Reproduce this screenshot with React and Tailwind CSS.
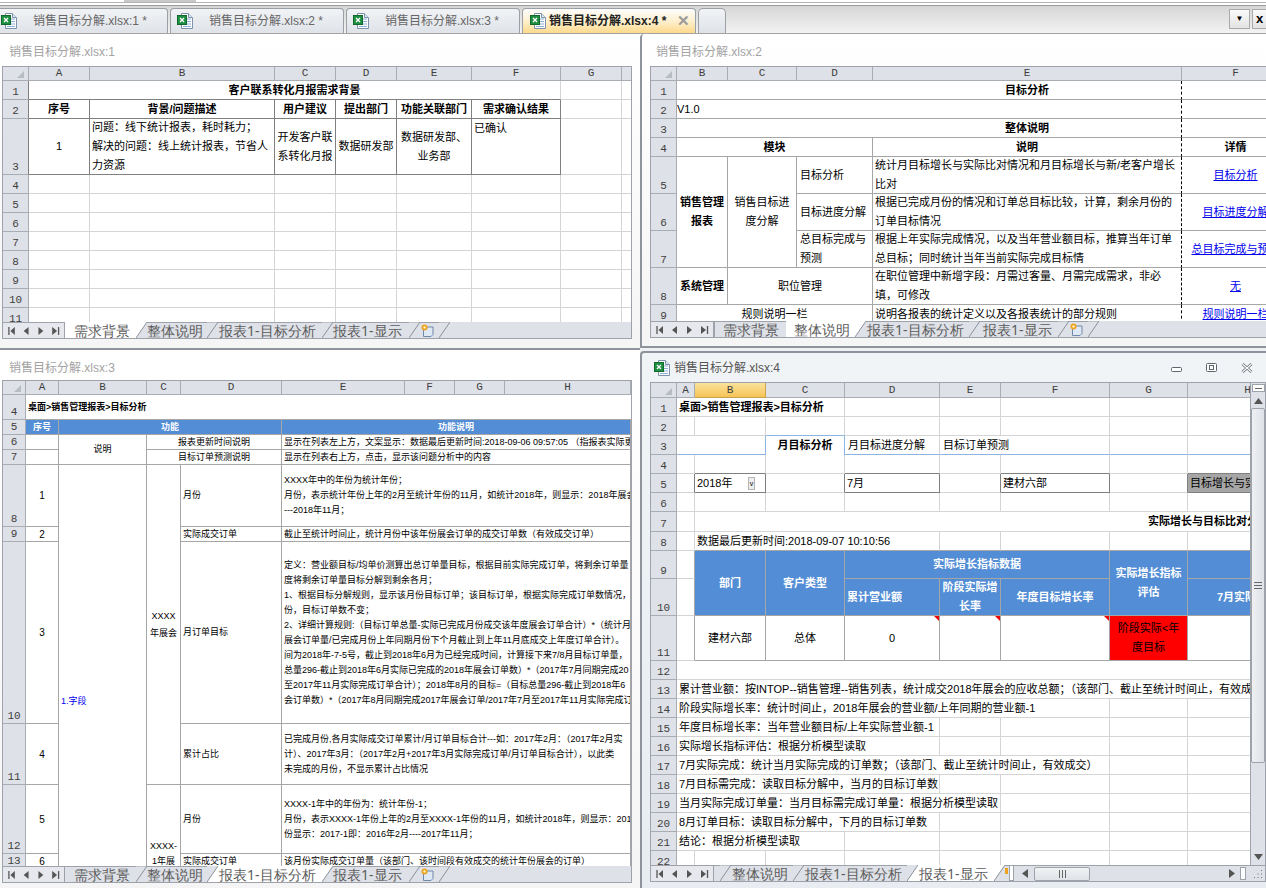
import React from 'react';

const G = 'border-r border-b border-[#d4d4d4]';
const L = 'border-r border-b border-[#a6a6a6]';
const D = 'border-r border-b border-[#808080]';
const BAR = 'border-[#9ea3ab]';

function C({ className = '', children }) {
  return <div className={`flex items-center overflow-hidden whitespace-nowrap min-w-0 min-h-0 ${className}`}>{children}</div>;
}

function Lines({ className = '', items }) {
  return (
    <div className={className}>
      {items.map((t, i) => (
        <div key={i}>{t}</div>
      ))}
    </div>
  );
}

function Hdr({ l, active }) {
  return (
    <div className={`flex items-center justify-center overflow-hidden border-r border-b [font-family:'Liberation_Mono',monospace] text-[11px] text-[#3f3f3f] ${active ? 'bg-gradient-to-b from-[#fbe29a] to-[#f6c455] border-[#c9a24a]' : 'bg-[#dee1e7] border-[#a8acb3]'}`}>
      {l}
    </div>
  );
}

function Corner() {
  return (
    <div className="flex items-end justify-end pr-[4px] pb-[2px] bg-[#dee1e7] border-r border-b border-[#a8acb3]">
      <svg width="7" height="7" viewBox="0 0 7 7"><polygon points="7,0 7,7 0,7" fill="#b7bbc2" /></svg>
    </div>
  );
}

function R({ n, className = '' }) {
  return (
    <div className={`flex items-end justify-center overflow-hidden bg-[#dee1e7] border-r border-b border-[#a8acb3] [font-family:'Liberation_Mono',monospace] text-[11px] leading-[14px] text-[#3f3f3f] ${className}`}>
      {n}
    </div>
  );
}

function ExcelIcon() {
  return (
    <svg width="16" height="16" viewBox="0 0 16 16" className="shrink-0">
      <path d="M4.5 0.5h7l4 4v11h-11z" fill="#fdfdfe" stroke="#7f93ad" />
      <path d="M11.5 0.5v4h4" fill="#dfe7f2" stroke="#7f93ad" />
      <path d="M10 6h4M10 8.5h4M10 11h4M6 13.5h8" stroke="#8fb0d8" />
      <rect x="0.5" y="2.5" width="9" height="9" fill="#1f8f41" stroke="#0f6a2c" />
      <path d="M3 5l4 4M7 5l-4 4" stroke="#fff" strokeWidth="1.3" />
    </svg>
  );
}

function Nav({ w }) {
  return (
    <div className={`h-full shrink-0 flex items-center bg-[#e6e8ed] border-t border-r border-[#9ea3ab] ${w}`}>
      <svg width="62" height="16" viewBox="0 0 62 16">
        <path d="M6 4v8" stroke="#555" strokeWidth="1.3" />
        <polygon points="7.5,8 12,4 12,12" fill="#555" />
        <polygon points="21,8 26,4 26,12" fill="#555" />
        <polygon points="41,8 36,4 36,12" fill="#555" />
        <polygon points="50,4 55,8 50,12" fill="#555" />
        <path d="M56.5 4v8" stroke="#555" strokeWidth="1.3" />
      </svg>
    </div>
  );
}

function Slant({ fill }) {
  return (
    <svg width="11" height="16" viewBox="0 0 11 16" className="shrink-0">
      <path d="M0 0H11" stroke={fill ? 'none' : '#9ea3ab'} />
      {fill === 'left' && <polygon points="0,0 11,0 0,16" fill="#fff" />}
      {fill === 'right' && <polygon points="11,0 11,16 0,16" fill="#fff" />}
      <line x1="0" y1="16" x2="11" y2="0" stroke="#8d9199" />
    </svg>
  );
}

function Tab({ w, label, active, pl = '' }) {
  return (
    <div className={`h-full shrink-0 flex items-center text-[14px] text-[#5c5c5c] ${w} ${pl} ${active ? 'bg-white' : 'border-t border-[#9ea3ab]'}`}>
      {label}
    </div>
  );
}

function NewSheet() {
  return (
    <div className="h-full w-[19px] shrink-0 flex items-center justify-end pr-[4px] border-t border-[#9ea3ab]">
      <svg width="14" height="14" viewBox="0 0 14 14">
        <path d="M2.5 3h9.5v7.5l-2 2H2.5z" fill="#dfe8f5" stroke="#6f87a8" />
        <circle cx="3.5" cy="3.5" r="3" fill="#f0a21f" />
        <circle cx="3.5" cy="3.5" r="1.2" fill="#fff2c0" />
      </svg>
    </div>
  );
}

function Sheet({ size, inner, bar, children }) {
  return (
    <div className={`shrink-0 flex flex-col border ${BAR} ${size}`}>
      <div className={`overflow-hidden bg-white [font-family:'Liberation_Sans','Noto_Sans_CJK_SC',sans-serif] ${inner}`}>{children}</div>
      <div className="h-[16px] shrink-0 flex bg-[#dee1e7] overflow-hidden">{bar}</div>
    </div>
  );
}

function TopTab({ title, x, active, first }) {
  return (
    <div className={`h-[25px] w-[174px] shrink-0 flex items-center rounded-t-[4px] border border-b-0 border-[#9aa0a6] ${first ? '-ml-[6px]' : 'ml-[2px]'} ${active ? 'bg-gradient-to-b from-[#fdfdfd] via-[#fdf0cf] to-[#fdd98a] text-[#222] font-bold' : 'bg-gradient-to-b from-[#f1f3f5] to-[#dfe3e8] text-[#666]'}`}>
      <div className={active ? 'ml-[7px]' : 'ml-[6px]'}><ExcelIcon /></div>
      <span className={active ? 'ml-[3px]' : 'ml-[16px]'}>{title}</span>
      {x && <span className="ml-[11px] text-[15px] font-bold text-[#9b9b9b]">✕</span>}
    </div>
  );
}

function TopBar() {
  return (
    <div className="h-[34px] shrink-0 flex flex-col text-[12px] [font-family:'Liberation_Sans','Noto_Sans_CJK_SC',sans-serif]">
      <div className="h-[3px] border-b border-[#b4b4b4] flex">
        <div className="ml-[124px] w-[72px] h-[2px] bg-[#c9c9c9]" />
      </div>
      <div className="h-[2px]" />
      <div className="h-[29px] flex items-start pt-[2px] bg-gradient-to-b from-[#d6d6d6] to-[#f3f3f3] border-t border-b border-[#9a9a9a] border-b-[#a3a3a3]">
        <TopTab first title="销售目标分解.xlsx:1 *" />
        <TopTab title="销售目标分解.xlsx:2 *" />
        <TopTab title="销售目标分解.xlsx:3 *" />
        <TopTab active x title="销售目标分解.xlsx:4 *" />
        <div className="ml-[2px] h-[25px] w-[28px] rounded-t-[5px] border border-b-0 border-[#9aa0a6] bg-gradient-to-b from-[#f1f3f5] to-[#dfe3e8]" />
        <div className="ml-auto flex gap-[2px] mt-[1px]">
          <div className="w-[21px] h-[20px] flex items-center justify-center border border-[#aaa] bg-gradient-to-b from-[#fafafa] to-[#e3e3e3] text-[8px] text-black">▼</div>
          <div className="w-[14px] h-[20px] flex items-center justify-center border border-[#aaa] border-r-0 bg-gradient-to-b from-[#fafafa] to-[#e3e3e3] text-[13px] font-bold text-black">x</div>
        </div>
      </div>
    </div>
  );
}

const nine = 'text-[9px] leading-[15px]';

function Win1() {
  const rows = [4, 5, 6, 7, 8, 9, 10, 11];
  return (
    <Sheet
      size="w-[630px] h-[273px]"
      inner="h-[255px]"
      bar={
        <>
          <Nav w="w-[62px]" />
          <Tab active w="w-[71px]" pl="pl-[9px]" label="需求背景" />
          <Slant fill="left" />
          <Tab w="w-[60px]" label="整体说明" />
          <Slant />
          <Tab w="w-[104px]" pl="pl-[1px]" label="报表1-目标分析" />
          <Slant />
          <Tab w="w-[76px]" label="报表1-显示" />
          <Slant />
          <NewSheet />
          <Slant />
        </>
      }
    >
      <div className="grid grid-cols-[26px_61px_185px_61px_61px_75px_89px_61px_61px] grid-rows-[14px_19px_19px_56px_19px_19px_19px_19px_19px_19px_19px_19px] text-[11px] leading-[19px] text-black">
        <Corner />
        {['A', 'B', 'C', 'D', 'E', 'F', 'G', ''].map((l, i) => <Hdr key={i} l={l} />)}
        <R n="1" className="border-r-[#808080]" />
        <C className={`col-span-6 justify-center font-bold ${G} border-b-[#808080]`}>客户联系转化月报需求背景</C>
        <C className={G} /><C className={G} />
        <R n="2" className="border-r-[#808080]" />
        <C className={`justify-center font-bold ${D}`}>序号</C>
        <C className={`justify-center font-bold ${D}`}>背景/问题描述</C>
        <C className={`justify-center font-bold ${D}`}>用户建议</C>
        <C className={`justify-center font-bold ${D}`}>提出部门</C>
        <C className={`justify-center font-bold ${D}`}>功能关联部门</C>
        <C className={`justify-center font-bold ${D}`}>需求确认结果</C>
        <C className={G} /><C className={G} />
        <R n="3" className="border-r-[#808080]" />
        <C className={`justify-center ${D}`}>1</C>
        <C className={`pl-[2px] ${D}`}>
          <Lines items={['问题：线下统计报表，耗时耗力；', '解决的问题：线上统计报表，节省人', '力资源']} />
        </C>
        <C className={`justify-center text-center ${D}`}><Lines items={['开发客户联', '系转化月报']} /></C>
        <C className={`justify-center ${D}`}>数据研发部</C>
        <C className={`justify-center text-center ${D}`}><Lines items={['数据研发部、', '业务部']} /></C>
        <C className={`items-start pl-[2px] ${D}`}>已确认</C>
        <C className={G} /><C className={G} />
        {rows.map((n) => (
          <React.Fragment key={n}>
            <R n={n} />
            {[0, 1, 2, 3, 4, 5, 6, 7].map((i) => <C key={i} className={G} />)}
          </React.Fragment>
        ))}
      </div>
    </Sheet>
  );
}

function Link({ children }) {
  return <span className="text-[#0000ee] underline">{children}</span>;
}

function Win2() {
  const E = `${L} border-r-black [border-right-style:dashed]`;
  return (
    <Sheet
      size="w-[620px] h-[272px]"
      inner="h-[254px]"
      bar={
        <>
          <Nav w="w-[63px]" />
          <Tab w="w-[72px]" pl="pl-[8px] border-l border-l-[#9ea3ab]" label="需求背景" />
          <Tab active w="w-[69px]" pl="pl-[8px]" label="整体说明" />
          <Slant fill="left" />
          <Tab w="w-[103px]" pl="pl-[1px]" label="报表1-目标分析" />
          <Slant />
          <Tab w="w-[78px]" pl="pl-[3px]" label="报表1-显示" />
          <Slant />
          <NewSheet />
          <Slant />
        </>
      }
    >
      <div className="grid grid-cols-[26px_51px_69px_76px_309px_108px] grid-rows-[14px_19px_19px_19px_19px_37px_37px_37px_37px_19px] text-[11px] leading-[19px] text-black">
        <Corner />
        {['B', 'C', 'D', 'E', 'F'].map((l) => <Hdr key={l} l={l} />)}
        <R n="1" />
        <C className={`col-span-3 border-b border-[#a6a6a6]`} />
        <C className={`justify-center font-bold ${E}`}>目标分析</C>
        <C className={L} />
        <R n="2" />
        <C className={`col-span-3 border-b border-[#a6a6a6]`}>V1.0</C>
        <C className={E} />
        <C className={L} />
        <R n="3" />
        <C className={`col-span-3 border-b border-[#a6a6a6]`} />
        <C className={`justify-center font-bold ${E}`}>整体说明</C>
        <C className={L} />
        <R n="4" />
        <C className={`col-span-3 justify-center font-bold ${L}`}>模块</C>
        <C className={`justify-center font-bold ${E}`}>说明</C>
        <C className={`justify-center font-bold ${L}`}>详情</C>

        <R n="5" />
        <C className={`row-span-3 justify-center text-center font-bold ${L}`}><Lines items={['销售管理', '报表']} /></C>
        <C className={`row-span-3 justify-center text-center ${L}`}><Lines items={['销售目标进', '度分解']} /></C>
        <C className={`pl-[3px] ${L}`}>目标分析</C>
        <C className={`pl-[2px] ${E}`}><Lines items={['统计月目标增长与实际比对情况和月目标增长与新/老客户增长', '比对']} /></C>
        <C className={`justify-center ${L}`}><Link>目标分析</Link></C>

        <R n="6" />
        <C className={`pl-[3px] ${L}`}>目标进度分解</C>
        <C className={`pl-[2px] ${E}`}><Lines items={['根据已完成月份的情况和订单总目标比较，计算，剩余月份的', '订单目标情况']} /></C>
        <C className={`justify-center ${L}`}><Link>目标进度分解</Link></C>

        <R n="7" />
        <C className={`pl-[3px] ${L}`}><Lines items={['总目标完成与', '预测']} /></C>
        <C className={`pl-[2px] ${E}`}><Lines items={['根据上年实际完成情况，以及当年营业额目标，推算当年订单', '总目标；同时统计当年当前实际完成目标情']} /></C>
        <C className={`justify-center ${L}`}><Link>总目标完成与预测</Link></C>

        <R n="8" />
        <C className={`justify-center font-bold ${L}`}>系统管理</C>
        <C className={`col-span-2 justify-center ${L}`}>职位管理</C>
        <C className={`pl-[2px] ${E}`}><Lines items={['在职位管理中新增字段：月需过客量、月需完成需求，非必', '填，可修改']} /></C>
        <C className={`justify-center ${L}`}><Link>无</Link></C>

        <R n="9" />
        <C className={`col-span-3 justify-center ${L}`}>规则说明一栏</C>
        <C className={`pl-[2px] ${E}`}>说明各报表的统计定义以及各报表统计的部分规则</C>
        <C className={`justify-center ${L}`}><Link>规则说明一栏</Link></C>
      </div>
    </Sheet>
  );
}

function Win3() {
  const T = `pl-[2px] ${L}`;
  const N = `justify-center text-[10px] ${L}`;
  return (
    <Sheet
      size="w-[630px] h-[503px]"
      inner="h-[485px]"
      bar={
        <>
          <Nav w="w-[62px]" />
          <Tab w="w-[71px]" pl="pl-[9px]" label="需求背景" />
          <Slant />
          <Tab w="w-[60px]" label="整体说明" />
          <Slant fill="right" />
          <Tab active w="w-[104px]" pl="pl-[1px]" label="报表1-目标分析" />
          <Slant fill="left" />
          <Tab w="w-[76px]" label="报表1-显示" />
          <Slant />
          <NewSheet />
          <Slant />
        </>
      }
    >
      <div className={`grid grid-cols-[23px_33px_88px_34px_101px_123px_50px_50px_126px] grid-rows-[14px_25px_15px_15px_15px_62px_15px_182px_61px_69px_15px] text-black ${nine}`}>
        <Corner />
        {['A', 'B', 'C', 'D', 'E', 'F', 'G', 'H'].map((l) => <Hdr key={l} l={l} />)}

        <R n="4" />
        <C className={`col-span-8 pl-[2px] font-bold border-b border-[#a6a6a6]`}>桌面&gt;销售管理报表&gt;目标分析</C>

        <R n="5" />
        <C className={`justify-center font-bold text-white bg-[#538dd5] ${L}`}>序号</C>
        <C className={`col-span-3 justify-center font-bold text-white bg-[#538dd5] ${L}`}>功能</C>
        <C className={`col-span-4 justify-center font-bold text-white bg-[#538dd5] ${L}`}>功能说明</C>

        <R n="6" />
        <C className={L} />
        <C className={`row-span-2 justify-center ${L}`}>说明</C>
        <C className={`col-span-2 justify-center ${L}`}>报表更新时间说明</C>
        <C className={`col-span-4 ${T}`}>显示在列表左上方，文案显示：数据最后更新时间:2018-09-06 09:57:05 （指报表实际更新时间）</C>

        <R n="7" />
        <C className={L} />
        <C className={`col-span-2 justify-center ${L}`}>目标订单预测说明</C>
        <C className={`col-span-4 ${T}`}>显示在列表右上方，点击，显示该问题分析中的内容</C>

        <R n="8" />
        <C className={N}>1</C>
        <C className={`row-span-6 items-start pl-[2px] pt-[229px] text-[#0000ee] ${L}`}>1.字段</C>
        <C className={`row-span-4 justify-center text-center ${L}`}><Lines className="leading-[17px]" items={['XXXX', '年展会']} /></C>
        <C className={T}>月份</C>
        <C className={`col-span-4 ${T}`}>
          <Lines items={['XXXX年中的年份为统计年份；', '月份，表示统计年份上年的2月至统计年份的11月，如统计2018年，则显示：2018年展会', '---2018年11月；']} />
        </C>

        <R n="9" />
        <C className={N}>2</C>
        <C className={T}>实际成交订单</C>
        <C className={`col-span-4 ${T}`}>截止至统计时间止，统计月份中该年份展会订单的成交订单数（有效成交订单）</C>

        <R n="10" />
        <C className={N}>3</C>
        <C className={T}>月订单目标</C>
        <C className={`col-span-4 ${T}`}>
          <Lines
            items={[
              '定义：营业额目标/均单价测算出总订单量目标，根据目前实际完成订单，将剩余订单量',
              '度将剩余订单量目标分解到剩余各月；',
              '1、根据目标分解规则，显示该月份目标订单；该目标订单，根据实际完成订单数情况，',
              '份，目标订单数不变；',
              '2、详细计算规则:（目标订单总量-实际已完成月份成交该年度展会订单合计）*（统计月',
              '展会订单量/已完成月份上年同期月份下个月截止到上年11月底成交上年度订单合计）。',
              '间为2018年-7-5号，截止到2018年6月为已经完成时间，计算接下来7/8月目标订单量，',
              '总量296-截止到2018年6月实际已完成的2018年展会订单数）*（2017年7月同期完成20',
              '至2017年11月实际完成订单合计）；2018年8月的目标=（目标总量296-截止到2018年6',
              '会订单数）*（2017年8月同期完成2017年展会订单/2017年7月至2017年11月实际完成订',
            ]}
          />
        </C>

        <R n="11" />
        <C className={N}>4</C>
        <C className={T}>累计占比</C>
        <C className={`col-span-4 ${T}`}>
          <Lines items={['已完成月份,各月实际成交订单累计/月订单目标合计---如：2017年2月：（2017年2月实', '计）、2017年3月：（2017年2月+2017年3月实际完成订单/月订单目标合计），以此类', '未完成的月份，不显示累计占比情况']} />
        </C>

        <R n="12" />
        <C className={N}>5</C>
        <C className={`row-span-2 items-start justify-center text-center pt-[54px] ${L}`}><Lines items={['XXXX-', '1年展']} /></C>
        <C className={T}>月份</C>
        <C className={`col-span-4 ${T}`}>
          <Lines items={['XXXX-1年中的年份为：统计年份-1；', '月份，表示XXXX-1年份上年的2月至XXXX-1年份的11月，如统计2018年，则显示：201', '份显示：2017-1即：2016年2月----2017年11月；']} />
        </C>

        <R n="13" />
        <C className={N}>6</C>
        <C className={T}>实际成交订单</C>
        <C className={`col-span-4 ${T}`}>该月份实际成交订单量（该部门、该时间段有效成交的统计年份展会的订单）</C>
      </div>
    </Sheet>
  );
}

function Triangle() {
  return <div className="absolute top-0 right-0 w-0 h-0 border-l-[5px] border-l-transparent border-t-[5px] border-t-[#f00000]" />;
}

function VScroll() {
  return (
    <div className="w-[15px] shrink-0 flex flex-col items-center bg-[#dee1e7] border-l border-[#9ea3ab]">
      <div className="w-[13px] h-[8px] mt-[1px] flex items-center justify-center bg-white border border-[#9ea3ab]">
        <div className="w-[7px] h-px bg-[#666]" />
      </div>
      <svg width="9" height="6" viewBox="0 0 9 6" className="mt-[6px]"><polygon points="4.5,0 9,6 0,6" fill="#555" /></svg>
      <div className="mt-[4px] w-[14px] h-[355px] flex items-center justify-center rounded-[2px] bg-gradient-to-r from-[#eef0f3] to-[#dfe2e7] border border-[#9ea3ab]">
        <svg width="8" height="7" viewBox="0 0 8 7"><path d="M0 .5h8M0 3.5h8M0 6.5h8" stroke="#666" /></svg>
      </div>
      <div className="flex-1" />
      <svg width="9" height="6" viewBox="0 0 9 6" className="mb-[5px]"><polygon points="0,0 9,0 4.5,6" fill="#555" /></svg>
    </div>
  );
}

function HScroll() {
  return (
    <div className="flex-1 h-full flex items-center border-t border-[#9ea3ab] bg-[#dee1e7]">
      <div className="w-[20px] flex justify-center pl-[2px]">
        <svg width="6" height="9" viewBox="0 0 6 9"><polygon points="0,4.5 6,0 6,9" fill="#555" /></svg>
      </div>
      <div className="w-[56px] h-[14px] flex items-center justify-center rounded-[2px] bg-gradient-to-b from-[#f0f2f4] to-[#dfe2e7] border border-[#9ea3ab]">
        <svg width="7" height="8" viewBox="0 0 7 8"><path d="M.5 0v8M3.5 0v8M6.5 0v8" stroke="#666" /></svg>
      </div>
      <div className="flex-1" />
      <svg width="6" height="9" viewBox="0 0 6 9"><polygon points="0,0 6,4.5 0,9" fill="#555" /></svg>
      <div className="ml-[5px] w-[6px] h-[13px] bg-white border border-[#9ea3ab]" />
      <div className="w-[19px] flex justify-end pr-[2px]">
        <svg width="10" height="10" viewBox="0 0 10 10"><path d="M8 1h1v1H8zM8 4.5h1v1H8zM4.5 4.5h1v1h-1zM8 8h1v1H8zM4.5 8h1v1h-1zM1 8h1v1H1z" fill="#777" /></svg>
      </div>
    </div>
  );
}

function Win4() {
  const W = 'border-r border-b border-[#d4d4d4]';
  const bl = 'border-[#8db4e2]';
  const head = `justify-center text-center font-bold text-white bg-[#538dd5] ${L}`;
  const Empty = ({ n }) => Array.from({ length: n }).map((_, i) => <C key={i} className={W} />);
  return (
    <Sheet
      size="w-[616px] h-[500px]"
      inner="h-[482px] flex"
      bar={
        <>
          <Nav w="w-[63px]" />
          <div className="w-[6px] h-full border-t border-[#9ea3ab]" />
          <Slant />
          <Tab w="w-[62px]" pl="pl-[1px]" label="整体说明" />
          <Slant />
          <Tab w="w-[103px]" pl="pl-[1px]" label="报表1-目标分析" />
          <Slant fill="right" />
          <Tab active w="w-[76px]" pl="pl-[1px]" label="报表1-显示" />
          <Slant fill="left" />
          <div className="w-[4px] h-full shrink-0 border-t border-[#9ea3ab] overflow-hidden"><div className="w-[3px] h-[6px] mt-[2px] bg-[#f0a21f]" /></div>
          <div className="w-[5px] h-full shrink-0 bg-white border-x border-y border-[#9ea3ab]" />
          <HScroll />
        </>
      }
    >
      <div className="w-[599px] h-full overflow-hidden shrink-0">
        <div className="grid w-[657px] grid-cols-[26px_18px_71px_79px_95px_61px_109px_78px_120px] grid-rows-[15px_19px_19px_19px_19px_19px_19px_20px_19px_28px_37px_45px_19px_19px_19px_19px_19px_19px_19px_19px_19px_19px_19px] text-[11px] leading-[19px] text-black">
          <Corner />
          <Hdr l="A" />
          <Hdr l="B" active />
          {['C', 'D', 'E', 'F', 'G', 'H'].map((l) => <Hdr key={l} l={l} />)}

          <R n="1" />
          <C className={`col-span-3 pl-[2px] font-bold ${W}`}>桌面&gt;销售管理报表&gt;目标分析</C>
          <Empty n={5} />

          <R n="2" />
          <C className={W} /><C className={W} />
          <C className={`${W} border-b-[#8db4e2]`} />
          <Empty n={5} />

          <R n="3" />
          <C className={`border-b ${bl}`} />
          <C className={`border-r border-b ${bl}`} />
          <C className={`justify-center font-bold border-r ${bl}`}>月目标分析</C>
          <C className={`pl-[3px] border-r border-b ${bl} border-r-[#d4d4d4]`}>月目标进度分解</C>
          <C className={`col-span-2 pl-[3px] border-r border-b ${bl} border-r-[#d4d4d4]`}>目标订单预测</C>
          <C className={`border-r border-b ${bl} border-r-[#d4d4d4]`} />
          <C className={`border-b ${bl}`} />

          <R n="4" />
          <C className={W} />
          <C className={`${W} border-b-[#808080]`} />
          <C className={W} />
          <C className={`${W} border-b-[#808080]`} />
          <C className={W} />
          <C className={`${W} border-b-[#808080]`} />
          <C className={W} />
          <C className={`${W} border-b-[#808080]`} />

          <R n="5" />
          <C className={`${W} border-r-[#808080]`} />
          <C className={`pl-[2px] justify-between pr-[10px] ${D}`}>
            2018年
            <span className="w-[7px] h-[13px] flex items-center justify-center bg-[#eceef1] border border-[#b5b5b5] text-[7px] leading-none">v</span>
          </C>
          <C className={`${W} border-r-[#808080]`} />
          <C className={`pl-[2px] ${D}`}>7月</C>
          <C className={`${W} border-r-[#808080]`} />
          <C className={`pl-[2px] ${D}`}>建材六部</C>
          <C className={`${W} border-r-[#808080]`} />
          <C className={`pl-[2px] bg-[#a6a6a6] ${D}`}>目标增长与实际比对</C>

          <R n="6" />
          <Empty n={8} />

          <R n="7" />
          <C className={W} />
          <C className={`col-span-7 pl-[453px] font-bold ${W}`}>实际增长与目标比对分析</C>

          <R n="8" />
          <C className={W} />
          <C className={`col-span-3 pl-[2px] ${W} border-b-[#a6a6a6]`}>数据最后更新时间:2018-09-07 10:10:56</C>
          <C className={`${W} border-b-[#a6a6a6]`} />
          <C className={`${W} border-b-[#a6a6a6]`} />
          <C className={`${W} border-b-[#a6a6a6]`} />
          <C className={`${W} border-b-[#a6a6a6]`} />

          <R n="9" />
          <C className={`${W} border-r-[#a6a6a6]`} />
          <C className={`row-span-2 ${head}`}>部门</C>
          <C className={`row-span-2 ${head}`}>客户类型</C>
          <C className={`col-span-3 ${head}`}>实际增长指标数据</C>
          <C className={`row-span-2 ${head}`}><Lines items={['实际增长指标', '评估']} /></C>
          <C className={head} />

          <R n="10" />
          <C className={`${W} border-r-[#a6a6a6]`} />
          <C className={`${head} justify-start pl-[2px]`}>累计营业额</C>
          <C className={head}><Lines items={['阶段实际增', '长率']} /></C>
          <C className={head}>年度目标增长率</C>
          <C className={head}>7月实际完成</C>

          <R n="11" />
          <C className={`${W} border-r-[#a6a6a6]`} />
          <C className={`justify-center ${L}`}>建材六部</C>
          <C className={`justify-center ${L}`}>总体</C>
          <C className={`relative justify-center ${L}`}>0<Triangle /></C>
          <C className={`relative ${L}`}><Triangle /></C>
          <C className={`relative ${L}`}><Triangle /></C>
          <C className={`justify-center text-center bg-[#ff0000] ${L}`}><Lines items={['阶段实际<年', '度目标']} /></C>
          <C className={L} />

          <R n="12" />
          <C className={`col-span-8 ${W}`} />

          <R n="13" />
          <C className={`col-span-8 pl-[2px] ${W}`}>累计营业额：按INTOP--销售管理--销售列表，统计成交2018年展会的应收总额；（该部门、截止至统计时间止，有效成交）</C>

          <R n="14" />
          <C className={`col-span-6 pl-[2px] ${W}`}>阶段实际增长率：统计时间止，2018年展会的营业额/上年同期的营业额-1</C>
          <Empty n={2} />

          <R n="15" />
          <C className={`col-span-4 pl-[2px] ${W}`}>年度目标增长率：当年营业额目标/上年实际营业额-1</C>
          <Empty n={4} />

          <R n="16" />
          <C className={`col-span-4 pl-[2px] ${W}`}>实际增长指标评估：根据分析模型读取</C>
          <Empty n={4} />

          <R n="17" />
          <C className={`col-span-6 pl-[2px] ${W}`}>7月实际完成：统计当月实际完成的订单数；（该部门、截止至统计时间止，有效成交）</C>
          <Empty n={2} />

          <R n="18" />
          <C className={`col-span-4 pl-[2px] ${W}`}>7月目标需完成：读取目标分解中，当月的目标订单数</C>
          <Empty n={4} />

          <R n="19" />
          <C className={`col-span-5 pl-[2px] ${W}`}>当月实际完成订单量：当月目标需完成订单量：根据分析模型读取</C>
          <Empty n={3} />

          <R n="20" />
          <C className={`col-span-4 pl-[2px] ${W}`}>8月订单目标：读取目标分解中，下月的目标订单数</C>
          <Empty n={4} />

          <R n="21" />
          <C className={`col-span-3 pl-[2px] ${W}`}>结论：根据分析模型读取</C>
          <Empty n={5} />

          <R n="22" />
          <Empty n={8} />
        </div>
      </div>
      <VScroll />
    </Sheet>
  );
}

const titleFont = "[font-family:'Liberation_Sans','Noto_Sans_CJK_SC',sans-serif]";

export default function App() {
  return (
    <div className="w-[1266px] h-[888px] overflow-hidden flex flex-col bg-white">
      <TopBar />
      <div className="grid grid-cols-[640px_626px] grid-rows-[314px_540px]">
        <div className="pl-[2px] bg-gradient-to-b from-white to-[#f5f5f5]">
          <div className={`h-[32px] pl-[7px] pt-[4px] flex items-center text-[12px] text-[#a3a3a3] ${titleFont}`}>销售目标分解.xlsx:1</div>
          <Win1 />
        </div>
        <div className="pl-[8px] border-l-2 border-b-2 border-[#8f939b] rounded-tl-[4px] bg-gradient-to-b from-white to-[#f5f5f5] overflow-hidden">
          <div className={`h-[32px] pl-[6px] pt-[4px] flex items-center text-[12px] text-[#a3a3a3] ${titleFont}`}>销售目标分解.xlsx:2</div>
          <Win2 />
        </div>
        <div className="pl-[2px] border-t-2 border-[#8f939b] bg-gradient-to-b from-white to-[#f5f5f5]">
          <div className={`h-[30px] pl-[7px] pt-[6px] flex items-center text-[12px] text-[#a3a3a3] ${titleFont}`}>销售目标分解.xlsx:3</div>
          <Win3 />
        </div>
        <div className="pt-[3px] bg-[#eef0f3]">
          <div className="h-full pl-[8px] border-l-2 border-t-2 border-[#8f939b] rounded-tl-[4px] bg-gradient-to-b from-[#f1f4f7] to-[#e9ecf0] overflow-hidden">
            <div className={`h-[29px] pl-[4px] flex items-center text-[12px] text-[#555] ${titleFont}`}>
              <ExcelIcon />
              <span className="ml-[4px]">销售目标分解.xlsx:4</span>
              <div className="ml-auto flex items-center mr-[13px] gap-[24px]">
                <svg width="11" height="5" viewBox="0 0 11 5" className="mt-[4px]"><rect x=".5" y=".5" width="10" height="4" rx="1" fill="#fff" stroke="#5f656d" /></svg>
                <svg width="11" height="9" viewBox="0 0 11 9"><rect x=".5" y=".5" width="10" height="8" rx="1" fill="#fff" stroke="#5f656d" /><rect x="3.5" y="2.5" width="4" height="4" fill="none" stroke="#5f656d" /></svg>
                <svg width="12" height="10" viewBox="0 0 12 10"><path d="M1.5 1l9 8M10.5 1l-9 8" stroke="#5f656d" strokeWidth="2.6" /><path d="M1.5 1l9 8M10.5 1l-9 8" stroke="#fff" strokeWidth="1.1" /></svg>
              </div>
            </div>
            <Win4 />
          </div>
        </div>
      </div>
    </div>
  );
}
